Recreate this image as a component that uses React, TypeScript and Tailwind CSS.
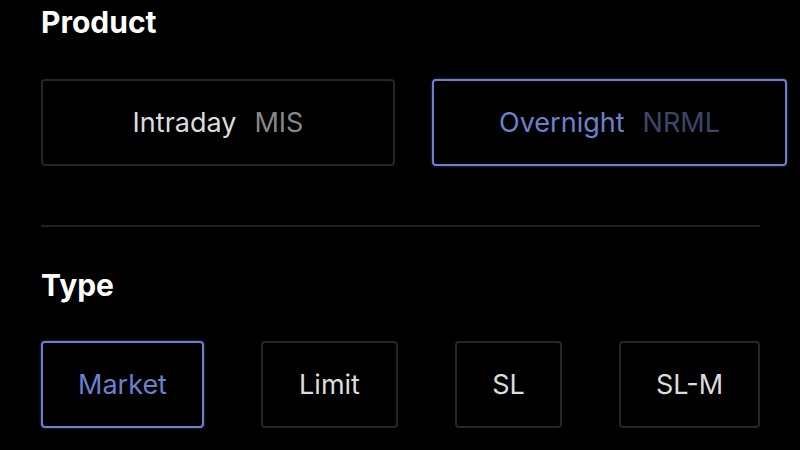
const font = { fontFamily: "Inter, 'Noto Sans', sans-serif" };

function Choice({ label, sub, active, className }: { label: string; sub?: string; active?: boolean; className: string }) {
  return (
    <div
      className={`flex h-[87px] items-center justify-center rounded-[4px] border-2 pt-[2px] ${
        active ? "border-[#6c80d0] shadow-[0_0_3px_rgba(108,128,208,0.5)]" : "border-[#262626]"
      } ${className}`}
    >
      <span className={`text-[27px] ${active ? "text-[#6b80cf]" : "text-[#dcdcdc]"}`}>{label}</span>
      {sub ? (
        <span className={`ml-[18px] text-[27px] ${active ? "text-[#3a4768]" : "text-[#878787]"}`}>{sub}</span>
      ) : null}
    </div>
  );
}

export default function App() {
  return (
    <div style={font} className="h-[450px] w-[800px] overflow-hidden bg-black pl-[41px]">
      <h2 className="pt-[4px] text-[30px] font-bold leading-[36px] text-white">Product</h2>

      <div className="mt-[39px] flex gap-[37px]">
        <Choice label="Intraday" sub="MIS" className="w-[354px]" />
        <Choice label="Overnight" sub="NRML" active className="w-[355px]" />
      </div>

      <div className="mt-[59px] h-[2px] w-[719px] bg-[#202020]" />

      <h2 className="mt-[40px] text-[30px] font-bold leading-[36px] text-white">Type</h2>

      <div className="mt-[38px] flex gap-[57px]">
        <Choice label="Market" active className="w-[163px]" />
        <Choice label="Limit" className="w-[137px]" />
        <Choice label="SL" className="w-[107px]" />
        <Choice label="SL-M" className="w-[141px]" />
      </div>
    </div>
  );
}
